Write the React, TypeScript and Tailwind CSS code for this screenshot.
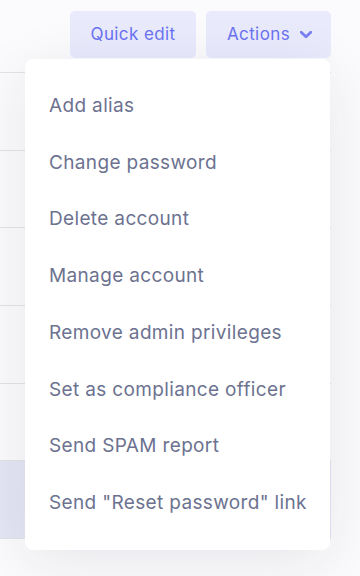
const items = [
  'Add alias',
  'Change password',
  'Delete account',
  'Manage account',
  'Remove admin privileges',
  'Set as compliance officer',
  'Send SPAM report',
  'Send "Reset password" link',
];

const rows = [0, 1, 2, 3, 4, 5];

export default function App() {
  return (
    <div
      className="relative h-[576px] w-[360px] overflow-hidden bg-[#fbfbfd]"
      style={{ fontFamily: 'Inter, "Open Sans", sans-serif' }}
    >
      <div className="w-[331px]">
        <div className="flex h-[72px] items-start justify-end gap-[10px] pt-[11px]">
          <button className="h-[47px] w-[126px] rounded-[5px] bg-[#e9eafc] text-[17px] tracking-[0.4px] text-[#6a72f2]">
            Quick edit
          </button>
          <button className="flex h-[47px] w-[125px] items-center justify-center gap-[10px] rounded-[5px] bg-[#e9eafc] pl-[2px] text-[17px] tracking-[0.4px] text-[#6a72f2]">
            Actions
            <svg width="12" height="8" viewBox="0 0 12 8" className="mt-[1px]">
              <path d="M1.2 1.2 L6 5.8 L10.8 1.2" fill="none" stroke="#7a80f0" strokeWidth="2.8" strokeLinecap="round" strokeLinejoin="round" />
            </svg>
          </button>
        </div>
        <div className="border-t border-[#e2e3e8]">
          {rows.map((r) => (
            <div
              key={r}
              className={`flex h-[77.7px] items-center justify-end border-b border-[#e2e3e8] ${r === 5 ? 'bg-[#e4e6f5]' : ''}`}
            >
              <div className="mr-[1px] h-[45px] w-[80px] rounded-[4px] bg-[#e9eafc]" />
            </div>
          ))}
        </div>
      </div>

      <div className="absolute left-[25px] top-[59px] flex h-[491px] w-[305px] flex-col rounded-[8px] bg-white pt-[19px] shadow-[0_12px_60px_rgba(30,30,60,0.09)]">
        {items.map((t) => (
          <div key={t} className="flex h-[56.7px] items-center whitespace-nowrap px-[24px] text-[19px] tracking-[0.35px] text-[#6c7290]">
            {t}
          </div>
        ))}
      </div>
    </div>
  );
}
